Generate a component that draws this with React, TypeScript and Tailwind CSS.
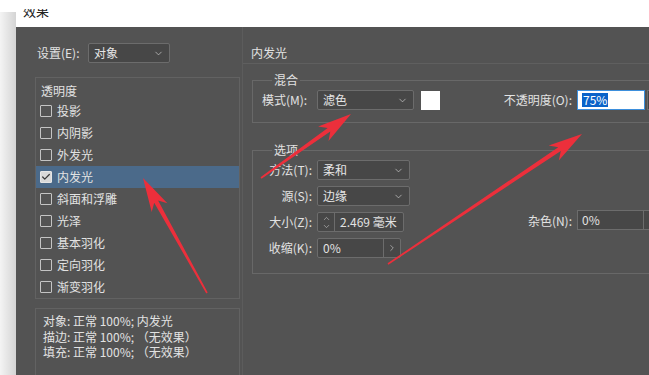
import { Check, ChevronDown, ChevronRight, ChevronUp } from 'lucide-react';

const ITEMS = ['投影', '内阴影', '外发光', '内发光', '斜面和浮雕', '光泽', '基本羽化', '定向羽化', '渐变羽化'];

function Select({ value, width }: { value: string; width: string }) {
  return (
    <div className={`${width} h-[20px] flex items-center justify-between px-[5px] border border-[#6c6c6c] bg-[#474747] rounded-[2px]`}>
      <span className="text-[12px] text-[#e6e6e6] leading-none">{value}</span>
      <ChevronDown size={11} strokeWidth={1.5} className="text-[#cfcfcf]" />
    </div>
  );
}

function Arrow({ x1, y1, x2, y2 }: { x1: number; y1: number; x2: number; y2: number }) {
  // tail (x1,y1) -> tip (x2,y2)
  const dx = x2 - x1;
  const dy = y2 - y1;
  const len = Math.hypot(dx, dy);
  const ux = dx / len;
  const uy = dy / len;
  const nx = -uy;
  const ny = ux;
  const head = 34;
  const hw = 9;
  const inner = 27;
  const sw = 2.2;
  const tw = 0.8;
  const p = (d: number, w: number) => `${(x2 - ux * d + nx * w).toFixed(1)},${(y2 - uy * d + ny * w).toFixed(1)}`;
  const pts = [
    `${x2},${y2}`,
    p(head, hw),
    p(inner, sw),
    p(len, tw),
    p(len, -tw),
    p(inner, -sw),
    p(head, -hw),
  ].join(' ');
  return <polygon points={pts} fill="#ec2f3b" />;
}

export default function App() {
  return (
    <div className="relative w-[649px] h-[375px] overflow-hidden flex bg-white [font-family:'Noto_Sans_CJK_SC','Liberation_Sans',sans-serif]">
      {/* shadow strip left of the window */}
      <div className="w-[16px] shrink-0 h-full flex flex-col">
        <div className="h-[12px] bg-white" />
        <div className="flex-1 bg-gradient-to-r from-[#f4f4f4] to-[#d4d4d4]" />
      </div>

      <div className="flex-1 min-w-0 overflow-hidden flex flex-col">
        {/* title bar, cut off at the top */}
        <div className="h-[27px] bg-white shrink-0">
          <div className="ml-[7px] mt-[9px] h-[9px] overflow-hidden">
            <div className="-mt-[5px] text-[13px] leading-[14px] text-[#222]">效果</div>
          </div>
        </div>

        <div className="flex-1 bg-[#535353] flex pl-[19px] text-[12px] text-[#e2e2e2]">
          {/* left column */}
          <div className="w-[205px] shrink-0 flex flex-col pt-[16px]">
            <div className="h-[20px] flex items-center pl-[2px]">
              <span className="w-[51px]">设置(E):</span>
              <Select value="对象" width="w-[82px]" />
            </div>

            <div className="mt-[14px] border border-[#626262] flex flex-col pt-[4px]">
              <div className="h-[18px] flex items-center px-[5px]">透明度</div>
              {ITEMS.map((item, i) => {
                const checked = i === 3;
                return (
                  <div key={item} className={`h-[22px] flex items-center pl-[4px] ${checked ? 'bg-[#4b6a8a]' : ''}`}>
                    <div
                      className={`w-[12px] h-[12px] border rounded-[1px] flex items-center justify-center ${
                        checked ? 'bg-[#d9d9d9] border-[#e6e6e6]' : 'border-[#c4c4c4]'
                      }`}
                    >
                      {checked && <Check size={10} strokeWidth={3} className="text-[#3a3a3a]" />}
                    </div>
                    <span className="ml-[5px]">{item}</span>
                  </div>
                );
              })}
            </div>

            <div className="mt-[9px] h-[90px] shrink-0 border border-[#626262] px-[7px] pt-[4px] leading-[15.5px]">
              <div>对象: 正常 100%; 内发光</div>
              <div>描边: 正常 100%; （无效果）</div>
              <div>填充: 正常 100%; （无效果）</div>
            </div>
          </div>

          {/* right column */}
          <div className="ml-[2px] w-[420px] shrink-0 flex flex-col border-l border-[#5c5c5c]">
            <div className="h-[37px] shrink-0 border-b border-[#5f5f5f] pl-[8px] pt-[18px] leading-[16px]">内发光</div>

            <fieldset className="mt-[10px] ml-[9px] border border-[#686868] pl-[9px] pb-[12px]">
              <legend className="ml-[10px] px-[2px] leading-[12px]">混合</legend>
              <div className="flex items-center h-[20px] mt-[4px]">
                <span className="w-[55px]">模式(M):</span>
                <Select value="滤色" width="w-[97px]" />
                <div className="ml-[7px] w-[19px] h-[19px] bg-white" />
                <span className="ml-[54px] w-[78px] text-right">不透明度(O):</span>
                <div className="ml-[5px] w-[68px] h-[20px] bg-white border border-[#3d8fdc] flex items-center pl-[4px]">
                  <span className="bg-[#0a63c9] text-white leading-[14px] px-[1px]">75%</span>
                </div>
                <div className="ml-[2px] w-[20px] h-[20px] bg-[#454545] border border-[#6c6c6c]" />
              </div>
            </fieldset>

            <fieldset className="mt-[21px] ml-[9px] border border-[#686868] pl-[9px] pb-[15px]">
              <legend className="ml-[10px] px-[2px] leading-[12px]">选项</legend>
              <div className="flex flex-col gap-[6px] mt-[4px]">
                <div className="flex items-center h-[20px]">
                  <span className="w-[50px] text-right">方法(T):</span>
                  <div className="ml-[5px]">
                    <Select value="柔和" width="w-[93px]" />
                  </div>
                </div>
                <div className="flex items-center h-[20px]">
                  <span className="w-[50px] text-right">源(S):</span>
                  <div className="ml-[5px]">
                    <Select value="边缘" width="w-[93px]" />
                  </div>
                </div>
                <div className="flex items-center h-[20px]">
                  <span className="w-[50px] text-right">大小(Z):</span>
                  <div className="ml-[5px] flex h-[20px] border border-[#6c6c6c] bg-[#474747] rounded-[2px]">
                    <div className="w-[17px] flex flex-col items-center justify-center border-r border-[#6c6c6c] text-[#cfcfcf]">
                      <ChevronUp size={9} strokeWidth={1.5} className="-mb-[1px]" />
                      <ChevronDown size={9} strokeWidth={1.5} />
                    </div>
                    <div className="w-[68px] flex items-center pl-[5px]">2.469 毫米</div>
                  </div>
                  <span className="ml-[108px] w-[60px] text-right -mt-[3px]">杂色(N):</span>
                  <div className="ml-[5px] flex h-[20px] -mt-[4px] border border-[#6c6c6c] bg-[#474747]">
                    <div className="w-[66px] flex items-center pl-[4px] border-r border-[#6c6c6c]">0%</div>
                    <div className="w-[20px]" />
                  </div>
                </div>
                <div className="flex items-center h-[20px]">
                  <span className="w-[50px] text-right">收缩(K):</span>
                  <div className="ml-[5px] flex h-[20px] border border-[#6c6c6c] bg-[#474747] rounded-[2px]">
                    <div className="w-[66px] flex items-center pl-[5px] border-r border-[#6c6c6c]">0%</div>
                    <div className="w-[16px] flex items-center justify-center text-[#cfcfcf]">
                      <ChevronRight size={10} strokeWidth={1.5} />
                    </div>
                  </div>
                </div>
              </div>
            </fieldset>
          </div>
        </div>
      </div>

      {/* red annotation arrows */}
      <svg className="absolute inset-0 pointer-events-none" width="649" height="375" viewBox="0 0 649 375">
        <Arrow x1={207} y1={293} x2={143} y2={178} />
        <Arrow x1={261} y1={178} x2={351} y2={114} />
        <Arrow x1={388} y1={264} x2={582} y2={134} />
      </svg>
    </div>
  );
}
